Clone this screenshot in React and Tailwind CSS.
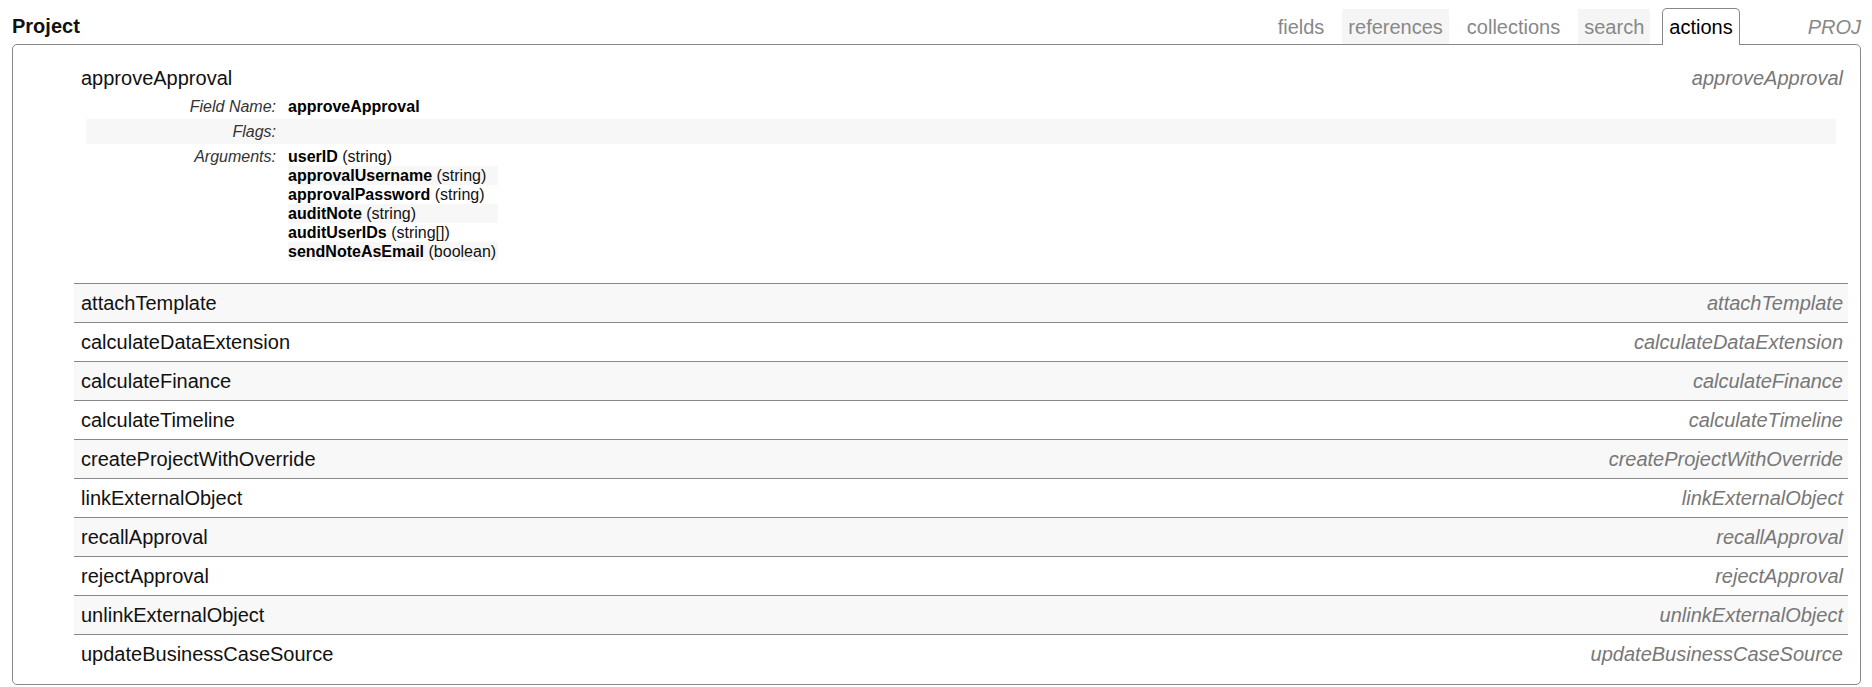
import React from 'react';

const tabs = [
  { name: 'fields', shaded: false },
  { name: 'references', shaded: true },
  { name: 'collections', shaded: false },
  { name: 'search', shaded: true },
  { name: 'actions', active: true },
];

const args = [
  ['userID', 'string'],
  ['approvalUsername', 'string'],
  ['approvalPassword', 'string'],
  ['auditNote', 'string'],
  ['auditUserIDs', 'string[]'],
  ['sendNoteAsEmail', 'boolean'],
];

const actions = [
  'attachTemplate',
  'calculateDataExtension',
  'calculateFinance',
  'calculateTimeline',
  'createProjectWithOverride',
  'linkExternalObject',
  'recallApproval',
  'rejectApproval',
  'unlinkExternalObject',
  'updateBusinessCaseSource',
];

function DetailRow({ label, shaded, children }) {
  return (
    <div className={`grid grid-cols-[200px_1fr] ${shaded ? 'bg-[#f7f7f7]' : ''}`}>
      <div className="text-right pr-[10px] py-[3px] leading-[19px] italic text-[#333]">{label}</div>
      <div className="pl-[2px] py-[3px] leading-[19px]">{children}</div>
    </div>
  );
}

export default function App() {
  return (
    <div className="min-h-screen bg-white pl-3 pr-[11px] pt-2 text-[#111]" style={{ fontFamily: '"Liberation Sans", Arial, sans-serif' }}>
      {/* header with tabs */}
      <div className="flex items-end justify-between h-[36px]">
        <div className="self-center text-[20px] font-bold leading-[23px] pt-[1px]">Project</div>
        <div className="flex items-end h-full">
          <div className="flex items-end gap-3 h-full">
            {tabs.map((t) =>
              t.active ? (
                <div
                  key={t.name}
                  className="relative z-10 -mb-px h-[37px] flex items-center px-[6px] border border-b-0 border-[#888] rounded-t-[5px] bg-white text-[20px] text-black"
                >
                  {t.name}
                </div>
              ) : (
                <div
                  key={t.name}
                  className={`h-[35px] flex items-center px-[6px] text-[20px] text-[#888] ${t.shaded ? 'bg-[#f5f5f5]' : ''}`}
                >
                  {t.name}
                </div>
              )
            )}
          </div>
          <div className="self-center ml-[68px] text-[20px] italic text-[#888] pt-[2px]">PROJ</div>
        </div>
      </div>

      {/* actions box */}
      <div className="border border-[#888] rounded-[5px] pl-[61px] pr-[12px] pt-[14px] pb-[11px]">
        {/* expanded item */}
        <div>
          <div className="flex justify-between pl-[7px] pr-[5px] pt-[8px] pb-[5px] text-[20px] leading-[22px]">
            <span>approveApproval</span>
            <span className="italic text-[#777]">approveApproval</span>
          </div>
          <div className="mx-[12px] text-[16px] pb-[19px]">
            <DetailRow label="Field Name:">
              <span className="font-bold text-black">approveApproval</span>
            </DetailRow>
            <DetailRow label="Flags:" shaded />
            <DetailRow label="Arguments:">
              <div className="w-fit">
                {args.map(([n, type], i) => (
                  <div key={n} className={`pr-[2px] ${i % 2 === 1 ? 'bg-[#f7f7f7]' : ''}`}>
                    <span className="font-bold text-black">{n}</span> ({type})
                  </div>
                ))}
              </div>
            </DetailRow>
          </div>
        </div>

        {actions.map((a, i) => (
          <div
            key={a}
            className={`flex justify-between border-t border-[#888] pl-[7px] pr-[5px] py-[8px] text-[20px] leading-[22px] ${i % 2 === 0 ? 'bg-[#f8f8f8]' : ''}`}
          >
            <span>{a}</span>
            <span className="italic text-[#777]">{a}</span>
          </div>
        ))}
      </div>
    </div>
  );
}
